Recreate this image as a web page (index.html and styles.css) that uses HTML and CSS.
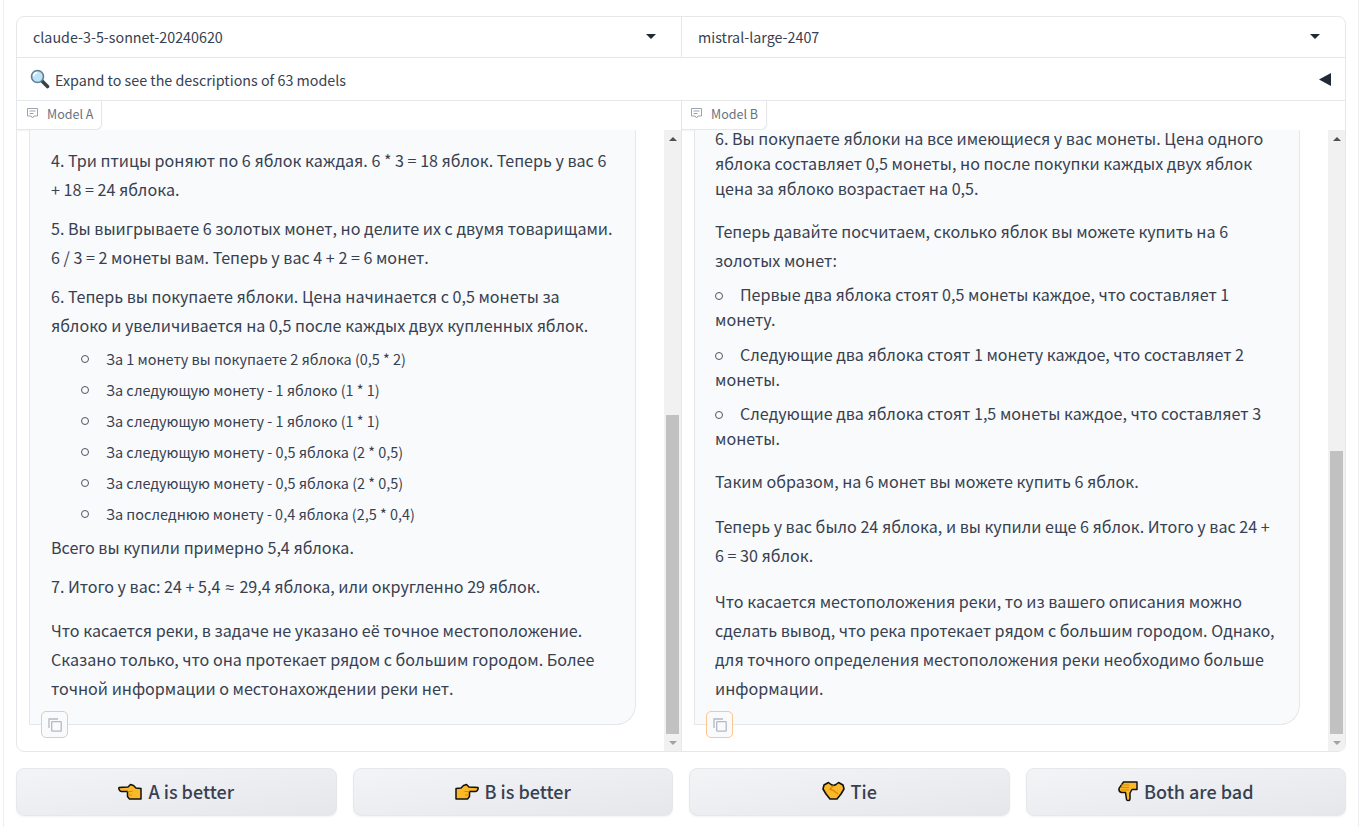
FILE: index.html
```html
<!DOCTYPE html>
<html>
	<head>
		<meta charset="utf-8" lang="ru" />
		<title>Chatbot Arena</title>
		<link rel="stylesheet" href="styles.css">
	</head>

	<body>
		<div class="frame">
			<div class="selectors">
				<div class="select">
					<span>claude-3-5-sonnet-20240620</span>
					<svg class="caret" width="10" height="5" viewBox="0 0 10 5"><path d="M0 0h10L5 5z" fill="#1f2937"/></svg>
				</div>
				<div class="select">
					<span>mistral-large-2407</span>
					<svg class="caret" width="10" height="5" viewBox="0 0 10 5"><path d="M0 0h10L5 5z" fill="#1f2937"/></svg>
				</div>
			</div>

			<div class="accordion">
				<div class="accordion-title">
					<svg class="magnifier" width="20" height="20" viewBox="0 0 20 20">
						<path d="M11.5 11.5l6 6" stroke="#3b4148" stroke-width="3.6" stroke-linecap="round"/>
						<circle cx="7.5" cy="7.5" r="6" fill="#bfe3f7" stroke="#5f7f96" stroke-width="1.6"/>
						<path d="M3.6 7.2a4 4 0 0 1 3.6-3.6" fill="none" stroke="#fff" stroke-width="1.6"/>
					</svg>
					<span>Expand to see the descriptions of 63 models</span>
				</div>
				<svg class="arrow" width="12" height="13" viewBox="0 0 12 13"><path d="M0 6.5L12 0v13z" fill="#1f2937"/></svg>
			</div>

			<div class="chats">
				<section class="chat">
					<div class="label-row">
						<div class="badge">
							<svg width="13" height="13" viewBox="0 0 13 13" fill="none" stroke="#9ca3af"><path d="M1.5 1.500h10v7.500H8l-1.500 2L5 9H1.500z"/><path d="M3.500 4h6M3.500 6.500h4"/></svg>
							<span>Model A</span>
						</div>
					</div>
					<div class="chat-body">
						<div class="messages">
							<div class="bubble bubble-a">
								<p>4. Три птицы роняют по 6 яблок каждая. 6 * 3 = 18 яблок. Теперь у вас 6 + 18 = 24 яблока.</p>
								<p>5. Вы выигрываете 6 золотых монет, но делите их с двумя товарищами. 6 / 3 = 2 монеты вам. Теперь у вас 4 + 2 = 6 монет.</p>
								<p class="before-list">6. Теперь вы покупаете яблоки. Цена начинается с 0,5 монеты за яблоко и увеличивается на 0,5 после каждых двух купленных яблок.</p>
								<ul class="sub-list">
									<li>За 1 монету вы покупаете 2 яблока (0,5 * 2)</li>
									<li>За следующую монету - 1 яблоко (1 * 1)</li>
									<li>За следующую монету - 1 яблоко (1 * 1)</li>
									<li>За следующую монету - 0,5 яблока (2 * 0,5)</li>
									<li>За следующую монету - 0,5 яблока (2 * 0,5)</li>
									<li>За последнюю монету - 0,4 яблока (2,5 * 0,4)</li>
								</ul>
								<p>Всего вы купили примерно 5,4 яблока.</p>
								<p class="wide-gap">7. Итого у вас: 24 + 5,4 <span class="approx">≈</span> 29,4 яблока, или округленно 29 яблок.</p>
								<p>Что касается реки, в задаче не указано её точное местоположение. Сказано только, что она протекает рядом с большим городом. Более точной информации о местонахождении реки нет.</p>
							</div>
							<button class="copy">
								<svg width="14" height="14" viewBox="0 0 14 14" fill="none" stroke="#b4b9c2" stroke-width="1.3"><path d="M1 10V1h9"/><rect x="3.700" y="3.700" width="9.500" height="9.500" rx="0.500"/></svg>
							</button>
						</div>
						<div class="scrollbar">
							<div class="scroll-up"></div>
							<div class="track"><div class="thumb thumb-a"></div></div>
							<div class="scroll-down"></div>
						</div>
					</div>
				</section>

				<section class="chat">
					<div class="label-row">
						<div class="badge">
							<svg width="13" height="13" viewBox="0 0 13 13" fill="none" stroke="#9ca3af"><path d="M1.5 1.500h10v7.500H8l-1.500 2L5 9H1.500z"/><path d="M3.500 4h6M3.500 6.500h4"/></svg>
							<span>Model B</span>
						</div>
					</div>
					<div class="chat-body">
						<div class="messages">
							<div class="bubble bubble-b">
								<p class="tight">6. Вы покупаете яблоки на все имеющиеся у вас монеты. Цена одного яблока составляет 0,5 монеты, но после покупки каждых двух яблок цена за яблоко возрастает на 0,5.</p>
								<p class="before-list">Теперь давайте посчитаем, сколько яблок вы можете купить на 6 золотых монет:</p>
								<ul class="main-list">
									<li>Первые два яблока стоят 0,5 монеты каждое, что составляет 1 монету.</li>
									<li>Следующие два яблока стоят 1 монету каждое, что составляет 2 монеты.</li>
									<li>Следующие два яблока стоят 1,5 монеты каждое, что составляет 3 монеты.</li>
								</ul>
								<p>Таким образом, на 6 монет вы можете купить 6 яблок.</p>
								<p class="before-last">Теперь у вас было 24 яблока, и вы купили еще 6 яблок. Итого у вас 24 + 6 = 30 яблок.</p>
								<p>Что касается местоположения реки, то из вашего описания можно сделать вывод, что река протекает рядом с большим городом. Однако, для точного определения местоположения реки необходимо больше информации.</p>
							</div>
							<button class="copy">
								<svg width="14" height="14" viewBox="0 0 14 14" fill="none" stroke="#b4b9c2" stroke-width="1.3"><path d="M1 10V1h9"/><rect x="3.700" y="3.700" width="9.500" height="9.500" rx="0.500"/></svg>
							</button>
						</div>
						<div class="scrollbar">
							<div class="scroll-up"></div>
							<div class="track"><div class="thumb thumb-b"></div></div>
							<div class="scroll-down"></div>
						</div>
					</div>
				</section>
			</div>
		</div>

		<div class="votes">
			<button class="vote">
				<svg width="24" height="17" viewBox="0 0 24 17">
					<path d="M1 4.500c3 -.5 6 -.5 9 -.5L12.500 1.500 15.500 2.500l2.500 2.500 5 .5V16H11.500L9.500 13.500V8.500H3.500C1.500 8.500 .5 5.500 1 4.500z" fill="#fbb829" stroke="#111" stroke-width="1.500" stroke-linejoin="round"/>
					<path d="M9.500 8.500h5M10 12h4" stroke="#d98a00" stroke-width="1.200"/>
				</svg>
				<span>A is better</span>
			</button>
			<button class="vote">
				<svg width="24" height="17" viewBox="0 0 24 17">
					<path d="M23 4.500c-3 -.5-6 -.5-9 -.5L11.500 1.500 8.500 2.500 6 5l-5 .5V16h11.500l2-2.500V8.500h6c2 0 3-3 2.500-4z" fill="#fbb829" stroke="#111" stroke-width="1.500" stroke-linejoin="round"/>
					<path d="M14.500 8.500h-5M14 12h-4" stroke="#d98a00" stroke-width="1.200"/>
				</svg>
				<span>B is better</span>
			</button>
			<button class="vote">
				<svg width="23" height="20" viewBox="0 0 23 20">
					<path d="M1 8l1-4 4.500-2.500L9 3.500l2.500 1 2.500-1 2.500-2L21 4l1 4-3 5-4 5h-7l-4-5z" fill="#fbb829" stroke="#111" stroke-width="1.600" stroke-linejoin="round"/>
					<path d="M11.500 4.500L8 8l3.500 1.500L16 13" fill="none" stroke="#d98a00" stroke-width="1.400"/>
				</svg>
				<span>Tie</span>
			</button>
			<button class="vote">
				<svg width="20" height="21" viewBox="0 0 20 21">
					<path d="M19 1H5.500L1 7.500c-.3 2 .5 3.500 2.500 4H7.500l1 7c.2 1.500 3.500 1.500 3.500-.5v-6L14 8.500h5z" fill="#fbb829" stroke="#111" stroke-width="1.500" stroke-linejoin="round"/>
					<path d="M3 4h8M2.500 6.500h8.500M3 9h8" stroke="#d98a00" stroke-width="1"/>
				</svg>
				<span>Both are bad</span>
			</button>
		</div>
	</body>
</html>
```

FILE: styles.css
```css
* { box-sizing: border-box; }
body {
	border-left: 1px solid #eeeff1;
	border-right: 1px solid #eeeff1;
	color: #374151;
	font-family: "Noto Sans CJK SC", "Noto Sans", sans-serif;
	font-size: 16.100px;
	margin: 0 1px 0 3px;
	padding: 16px 12px 11px;
}
p, ul { margin: 0; padding: 0; }
ul { list-style-type: none; }


/* Frame */
.frame {
	background: #fff;
	border: 1px solid #e5e7eb;
	border-radius: 8px;
	display: flex;
	flex-direction: column;
	height: 736px;
	overflow: hidden;
}

/* Dropdowns */
.selectors {
	border-bottom: 1px solid #e5e7eb;
	display: grid;
	grid-template-columns: 665px 1fr;
	height: 41px;
}
.select {
	align-items: center;
	display: flex;
	font-size: 14.300px;
	justify-content: space-between;
	padding: 0 25px 1px 16px;
}
.select:first-child { border-right: 1px solid #e5e7eb; }

/* Accordion */
.accordion {
	align-items: center;
	border-bottom: 1px solid #e5e7eb;
	display: flex;
	font-size: 14.300px;
	height: 43px;
	justify-content: space-between;
	padding: 0 14px 0 13px;
}
.accordion-title {
	align-items: center;
	display: flex;
	gap: 5px;
}

/* Chats */
.chats {
	display: grid;
	flex: 1;
	grid-template-columns: 665px 1fr;
	min-height: 0;
}
.chat {
	display: flex;
	flex-direction: column;
	min-height: 0;
}
.chat:first-child { border-right: 1px solid #e5e7eb; }
.label-row { height: 29px; }
.badge {
	align-items: center;
	border-bottom: 1px solid #e5e7eb;
	border-right: 1px solid #e5e7eb;
	border-radius: 0 0 6px 0;
	box-shadow: 0 1px 2px rgba(0, 0, 0, 0.05);
	color: #6b7280;
	display: inline-flex;
	font-size: 12.500px;
	gap: 8px;
	height: 29px;
	padding: 0 8px 3px 8px;
}
.chat:first-child .badge { padding-left: 9px; }
.chat-body {
	display: flex;
	flex: 1;
	min-height: 0;
}
.messages {
	display: flex;
	flex: 1;
	flex-direction: column;
	justify-content: flex-end;
	min-width: 0;
	overflow: hidden;
	padding: 0 28px 26px 12px;
	position: relative;
}
.bubble {
	background: #f9fafb;
	border: 1px solid #e5e7eb;
	border-radius: 0 0 20px 0;
	border-top: 0;
	flex-shrink: 0;
	line-height: 29px;
	padding: 30px 20px 21px 21px;
}
.bubble-b { padding-left: 20px; }
.bubble-a p { margin-bottom: 10px; }
.bubble-b p { margin-bottom: 16px; }
.bubble p:last-child { margin-bottom: 0; }
.bubble .before-list { margin-bottom: 3px; }
.bubble .wide-gap { margin-bottom: 14px; }
.bubble .before-last { margin-bottom: 17px; }
.tight { line-height: 25px; }
.approx {
	font-family: "Noto Sans", sans-serif;
	margin: 0 1.500px;
}

.sub-list {
	font-size: 14.450px;
	line-height: 31px;
	margin-bottom: 4px;
	padding-left: 30px;
}
.main-list {
	line-height: 25px;
	margin: 7px 0 16px;
}
.main-list li { margin-bottom: 9.500px; }
.main-list li:last-child { margin-bottom: 0; }
.sub-list li::before,
.main-list li::before {
	border: 1px solid #4b5563;
	border-radius: 50%;
	content: '';
	display: inline-block;
	height: 6px;
	margin-right: 17px;
	vertical-align: 2px;
	width: 6px;
}
.main-list li::before { vertical-align: 1px; }

.copy {
	align-items: center;
	background: #f9fafb;
	border: 1px solid #fdc68c;
	border-radius: 5px;
	bottom: 13px;
	display: flex;
	height: 27px;
	justify-content: center;
	left: 24px;
	padding: 0;
	position: absolute;
	width: 27px;
}

/* Scrollbars */
.scrollbar {
	background: #f1f1f1;
	display: flex;
	flex-direction: column;
	flex-shrink: 0;
	width: 17px;
}
.scroll-up,
.scroll-down {
	align-items: center;
	display: flex;
	flex-shrink: 0;
	height: 17px;
	justify-content: center;
}
.scroll-up::after,
.scroll-down::after {
	border-left: 4px solid transparent;
	border-right: 4px solid transparent;
	content: '';
}
.scroll-up::after { border-bottom: 4px solid #505050; }
.scroll-down::after { border-top: 4px solid #a3a3a3; }
.track {
	display: flex;
	flex: 1;
	flex-direction: column;
	justify-content: flex-end;
	padding: 0 2px;
}
.thumb { background: #c1c1c1; }
.thumb-a { height: 319px; }
.thumb-b { height: 283px; }

/* Vote buttons */
.votes {
	display: grid;
	gap: 16px;
	grid-template-columns: repeat(4, 1fr);
	margin-top: 16px;
}
.vote {
	align-items: center;
	background: linear-gradient(to bottom right, #f3f4f6, #e5e7eb);
	border: 1px solid #e5e7eb;
	border-radius: 8px;
	box-shadow: 0 1px 2px rgba(0, 0, 0, 0.05);
	color: #374151;
	display: flex;
	font-family: inherit;
	font-size: 18px;
	font-weight: 500;
	gap: 6px;
	height: 48px;
	justify-content: center;
	padding: 0 0 2px;
}
```
